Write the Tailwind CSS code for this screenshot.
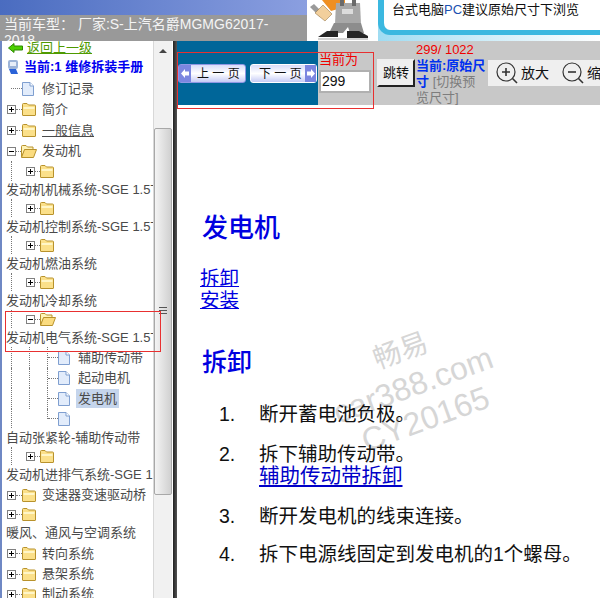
<!DOCTYPE html>
<html lang="zh">
<head>
<meta charset="utf-8">
<title>维修拆装手册</title>
<script src="https://cdn.jsdelivr.net/npm/@tailwindcss/browser@4"></script>
</head>
<body class="w-[600px] h-[598px] overflow-hidden bg-white font-['Liberation_Sans','Noto_Sans_CJK_SC',sans-serif]">

<!-- shared tree icons -->
<svg class="hidden">
  <symbol id="closed" viewBox="0 0 14 13">
    <path d="M.5 3V1.500Q.5.500 1.500.500H5L6.500 2H12.500Q13.500 2 13.500 3V12Q13.500 12.500 13 12.500H1Q.5 12.500 .5 12Z" fill="#fbe08a" stroke="#b8922c"/>
    <path d="M1.500 4H12.500V6H1.500Z" fill="#fff6c8"/>
  </symbol>
  <symbol id="open" viewBox="0 0 16 13">
    <path d="M.5 12V1.500Q.5.500 1.500.500H5L6.500 2H12V4.500H4L.5 12Z" fill="#fff3b8" stroke="#b8922c"/>
    <path d="M.5 12.500L3.500 4.500H15.500L12.500 12.500Z" fill="#fbdc80" stroke="#b8922c"/>
  </symbol>
  <symbol id="doc" viewBox="0 0 12 14">
    <path d="M.5.500H8L11.500 4V13.500H.5Z" fill="#e2ecfb" stroke="#7f9fd0"/>
    <path d="M8 .5V4H11.500" fill="#fff" stroke="#7f9fd0"/>
  </symbol>
  <symbol id="plus" viewBox="0 0 9 9">
    <rect x=".5" y=".5" width="8" height="8" fill="#fff" stroke="#808080"/>
    <path d="M2 4.500H7M4.500 2V7" stroke="#000"/>
  </symbol>
  <symbol id="minus" viewBox="0 0 9 9">
    <rect x=".5" y=".5" width="8" height="8" fill="#fff" stroke="#808080"/>
    <path d="M2 4.500H7" stroke="#000"/>
  </symbol>
</svg>

<!-- top strip -->
<div class="flex h-[41px]">
  <div class="w-[307px] flex flex-col">
    <div class="h-[15px] bg-gradient-to-r from-[#4a6cc0] to-[#8b9fe0]"></div>
    <div class="h-[26px] overflow-hidden bg-[#999999] pl-[4px] pt-[1px] text-[14px] leading-[16px] text-[#f4f4f4] whitespace-nowrap">当前车型：&nbsp;厂家:S-上汽名爵MGMG62017-<br>2018</div>
  </div>
  <svg class="w-[71px] h-[41px] bg-white" viewBox="0 0 71 41">
    <path d="M3 7L7 4L16 13L13 17Z" fill="#9a9a9a"/>
    <path d="M8 13L16 5L25 14L18 21Z" fill="#f2cf9c" stroke="#8a6a3a" stroke-width=".5"/>
    <path d="M15 0H38V7L24 11Z" fill="#ef8f22"/>
    <path d="M29 3H53L54 24H28Z" fill="#a8a8a8"/>
    <path d="M33 0H37V6H33ZM45 0H49V6H45Z" fill="#6a6a6a"/>
    <path d="M35 9H46V14H35Z" fill="#dcdcdc"/>
    <path d="M27 23H54L57 33H43L41 27L36 33H22Z" fill="#8d8d8d"/>
    <path d="M11 37L20 31H31L31 37Z" fill="#262626"/>
    <path d="M40 31H52L61 36V38H40Z" fill="#262626"/>
    <path d="M11 39H61" stroke="#c4c4c4" stroke-width="1.500"/>
  </svg>
  <div class="flex-1 bg-gradient-to-r from-[#9fdcf2] to-white">
    <div class="h-[35px] border-l-[6px] border-b-[5px] border-[#3bb8e0] rounded-bl-[12px] bg-white pl-[8px] pt-[1px] text-[13px] leading-[18px] text-[#111]">台式电脑<span class="text-[#1a50b0]">PC</span>建议原始尺寸下浏览</div>
  </div>
</div>

<div class="flex h-[557px]">
  <!-- tree panel -->
  <div class="relative w-[173px] overflow-hidden border-l-2 border-[#6f88c4] text-[13px] text-[#4a4a4a]">
    <div class="-ml-[2px] w-[153px]">
      <div class="flex items-center h-[13px] pl-[8px] gap-[4px] text-[#4f9a00] underline">
        <svg class="w-[15px] h-[10px]" viewBox="0 0 15 10"><path d="M.5 5L6 .5V3H14.500V7H6V9.500Z" fill="#4cd000" stroke="#2f8a00"/></svg>
        <span>返回上一级</span>
      </div>
      <div class="flex items-center h-[20px] mt-[3px] pl-[7px] gap-[5px] font-bold text-[#0000f0] whitespace-nowrap">
        <svg class="w-[12px] h-[16px]" viewBox="0 0 12 16"><rect x="1" y="1" width="10" height="9" rx="2" fill="#9db4d8"/><rect x="3" y="3" width="6" height="4" fill="#e8eef8"/><path d="M2 10H9L11 15H4Z" fill="#2a62d8"/></svg>
        <span>当前:1 维修拆装手册</span>
      </div>

      <div class="relative flex items-center h-[21px] mt-[1px] pl-[11px]"><span class="w-[11px] border-t border-dotted border-[#777]"></span><svg class="w-[12px] h-[14px]"><use href="#doc"/></svg><span class="ml-[8px]">修订记录</span></div>
      <div class="relative flex items-center h-[21px] pl-[7px]"><svg class="relative w-[9px] h-[9px]"><use href="#plus"/></svg><span class="w-[6px] border-t border-dotted border-[#777]"></span><svg class="w-[14px] h-[13px]"><use href="#closed"/></svg><span class="ml-[6px]">简介</span></div>
      <div class="relative flex items-center h-[21px] pl-[7px]"><svg class="relative w-[9px] h-[9px]"><use href="#plus"/></svg><span class="w-[6px] border-t border-dotted border-[#777]"></span><svg class="w-[14px] h-[13px]"><use href="#closed"/></svg><span class="ml-[6px] underline">一般信息</span></div>
      <div class="relative flex items-center h-[20px] pl-[7px]"><svg class="relative w-[9px] h-[9px]"><use href="#minus"/></svg><span class="w-[5px] border-t border-dotted border-[#777]"></span><svg class="w-[16px] h-[13px]"><use href="#open"/></svg><span class="ml-[5px]">发动机</span></div>

      <div class="flex items-center h-[20px] pl-[11px]"><span class="h-full border-l border-dotted border-[#777]"></span><svg class="ml-[14px] w-[9px] h-[9px]"><use href="#plus"/></svg><span class="w-[5px] border-t border-dotted border-[#777]"></span><svg class="w-[14px] h-[13px]"><use href="#closed"/></svg></div>
      <div class="flex items-center h-[18px] pl-[6px] whitespace-nowrap overflow-hidden">发动机机械系统-SGE 1.5T</div>
      <div class="flex items-center h-[18px] pl-[11px]"><span class="h-full border-l border-dotted border-[#777]"></span><svg class="ml-[14px] w-[9px] h-[9px]"><use href="#plus"/></svg><span class="w-[5px] border-t border-dotted border-[#777]"></span><svg class="w-[14px] h-[13px]"><use href="#closed"/></svg></div>
      <div class="flex items-center h-[19px] pl-[6px] whitespace-nowrap overflow-hidden">发动机控制系统-SGE 1.5T</div>
      <div class="flex items-center h-[18px] pl-[11px]"><span class="h-full border-l border-dotted border-[#777]"></span><svg class="ml-[14px] w-[9px] h-[9px]"><use href="#plus"/></svg><span class="w-[5px] border-t border-dotted border-[#777]"></span><svg class="w-[14px] h-[13px]"><use href="#closed"/></svg></div>
      <div class="flex items-center h-[19px] pl-[6px] whitespace-nowrap overflow-hidden">发动机燃油系统</div>
      <div class="flex items-center h-[18px] pl-[11px]"><span class="h-full border-l border-dotted border-[#777]"></span><svg class="ml-[14px] w-[9px] h-[9px]"><use href="#plus"/></svg><span class="w-[5px] border-t border-dotted border-[#777]"></span><svg class="w-[14px] h-[13px]"><use href="#closed"/></svg></div>
      <div class="flex items-center h-[19px] pl-[6px] whitespace-nowrap overflow-hidden">发动机冷却系统</div>
      <div class="flex items-center h-[18px] pl-[11px]"><span class="h-full border-l border-dotted border-[#777]"></span><svg class="ml-[14px] w-[9px] h-[9px]"><use href="#minus"/></svg><span class="w-[5px] border-t border-dotted border-[#777]"></span><svg class="w-[16px] h-[13px]"><use href="#open"/></svg></div>
      <div class="flex items-center h-[19px] pl-[6px] whitespace-nowrap overflow-hidden">发动机电气系统-SGE 1.5T</div>

      <div class="flex items-center h-[21px] pl-[11px]"><span class="h-full border-l border-dotted border-[#777]"></span><span class="ml-[17px] h-full border-l border-dotted border-[#777]"></span><span class="ml-[17px] h-full border-l border-dotted border-[#777]"></span><span class="w-[10px] border-t border-dotted border-[#777]"></span><svg class="w-[12px] h-[14px]"><use href="#doc"/></svg><span class="ml-[8px]">辅助传动带</span></div>
      <div class="flex items-center h-[20px] pl-[11px]"><span class="h-full border-l border-dotted border-[#777]"></span><span class="ml-[17px] h-full border-l border-dotted border-[#777]"></span><span class="ml-[17px] h-full border-l border-dotted border-[#777]"></span><span class="w-[10px] border-t border-dotted border-[#777]"></span><svg class="w-[12px] h-[14px]"><use href="#doc"/></svg><span class="ml-[8px]">起动电机</span></div>
      <div class="flex items-center h-[21px] pl-[11px]"><span class="h-full border-l border-dotted border-[#777]"></span><span class="ml-[17px] h-full border-l border-dotted border-[#777]"></span><span class="ml-[17px] h-full border-l border-dotted border-[#777]"></span><span class="w-[10px] border-t border-dotted border-[#777]"></span><svg class="w-[12px] h-[14px]"><use href="#doc"/></svg><span class="ml-[6px] px-[2px] bg-[#c5d5ec]">发电机</span></div>
      <div class="flex items-center h-[19px] pl-[11px]"><span class="h-full border-l border-dotted border-[#777]"></span><span class="ml-[35px] h-1/2 self-start border-l border-dotted border-[#777]"></span><span class="w-[10px] border-t border-dotted border-[#777]"></span><svg class="w-[12px] h-[14px]"><use href="#doc"/></svg></div>

      <div class="flex items-center h-[19px] pl-[6px] whitespace-nowrap overflow-hidden">自动张紧轮-辅助传动带</div>
      <div class="flex items-center h-[18px] pl-[11px]"><span class="h-full border-l border-dotted border-[#777]"></span><svg class="ml-[14px] w-[9px] h-[9px]"><use href="#plus"/></svg><span class="w-[5px] border-t border-dotted border-[#777]"></span><svg class="w-[14px] h-[13px]"><use href="#closed"/></svg></div>
      <div class="flex items-center h-[20px] pl-[6px] whitespace-nowrap overflow-hidden">发动机进排气系统-SGE 1.5T</div>

      <div class="flex items-center h-[20px] pl-[7px]"><svg class="w-[9px] h-[9px]"><use href="#plus"/></svg><span class="w-[6px] border-t border-dotted border-[#777]"></span><svg class="w-[14px] h-[13px]"><use href="#closed"/></svg><span class="ml-[6px] whitespace-nowrap">变速器变速驱动桥</span></div>
      <div class="flex items-center h-[18px] pl-[7px]"><svg class="w-[9px] h-[9px]"><use href="#plus"/></svg><span class="w-[6px] border-t border-dotted border-[#777]"></span><svg class="w-[14px] h-[13px]"><use href="#closed"/></svg></div>
      <div class="flex items-center h-[20px] pl-[6px] whitespace-nowrap overflow-hidden">暖风、通风与空调系统</div>
      <div class="flex items-center h-[21px] pl-[7px]"><svg class="w-[9px] h-[9px]"><use href="#plus"/></svg><span class="w-[6px] border-t border-dotted border-[#777]"></span><svg class="w-[14px] h-[13px]"><use href="#closed"/></svg><span class="ml-[6px]">转向系统</span></div>
      <div class="flex items-center h-[20px] pl-[7px]"><svg class="w-[9px] h-[9px]"><use href="#plus"/></svg><span class="w-[6px] border-t border-dotted border-[#777]"></span><svg class="w-[14px] h-[13px]"><use href="#closed"/></svg><span class="ml-[6px]">悬架系统</span></div>
      <div class="flex items-center h-[20px] pl-[7px]"><svg class="w-[9px] h-[9px]"><use href="#plus"/></svg><span class="w-[6px] border-t border-dotted border-[#777]"></span><svg class="w-[14px] h-[13px]"><use href="#closed"/></svg><span class="ml-[6px]">制动系统</span></div>
    </div>

    <!-- scrollbar -->
    <div class="absolute top-0 bottom-0 left-[151px] w-[19px] bg-[#f1f1f1] border-l border-[#d8d8d8]">
      <div class="mx-auto mt-[8px] w-0 h-0 border-x-[4px] border-x-transparent border-b-[4px] border-b-[#444]"></div>
      <div class="mt-[75px] h-[367px] border border-[#a8a8a8] rounded-[2px] bg-gradient-to-r from-[#f4f4f4] to-[#d0d0d0] flex flex-col items-center pt-[178px] gap-[2px]">
        <span class="w-[8px] border-t border-[#555]"></span>
        <span class="w-[8px] border-t border-[#555]"></span>
        <span class="w-[8px] border-t border-[#555]"></span>
      </div>
    </div>

    <!-- red highlight from the annotator -->
    <div class="absolute left-[3px] top-[270px] w-[156px] h-[41px] border border-[#e83030]"></div>
  </div>

  <!-- divider -->
  <div class="w-[4px] bg-gradient-to-r from-[#222] to-[#555]"></div>

  <!-- page -->
  <div class="relative flex-1 overflow-hidden">
    <!-- watermark -->
    <div class="absolute left-[136px] top-[290px] w-[200px] -rotate-[20deg] text-center text-[#d6d6d6]">
      <div class="text-[28px] leading-[36px]">畅易</div>
      <div class="text-[32px] leading-[36px] whitespace-nowrap">car388.com</div>
      <div class="text-[32px] leading-[36px]">CY20165</div>
    </div>

    <div class="relative flex h-[64px] bg-[#c8c8c8]">
      <div class="w-[141px] bg-[#006699] flex items-start gap-[4px] pt-[23px] pl-[1px]">
        <div class="relative w-[68px] h-[19px] rounded-[3px] bg-gradient-to-b from-[#d9dcf9] via-white to-[#c6cbf5] border border-[#8f97e4] flex items-center pl-[18px] text-[12px] text-[#111]">
          <span class="absolute left-0 top-0 bottom-0 w-[12px] bg-[#7b86e0] flex items-center justify-center">
            <svg class="w-[8px] h-[9px]" viewBox="0 0 8 9"><path d="M0 4.500L4 0V2.500H8V6.500H4V9Z" fill="#fff"/></svg>
          </span>
          上 一 页
        </div>
        <div class="relative w-[67px] h-[19px] rounded-[3px] bg-gradient-to-b from-[#d9dcf9] via-white to-[#c6cbf5] border border-white flex items-center pl-[8px] text-[12px] text-[#111]">
          下 一 页
          <span class="absolute right-0 top-0 bottom-0 w-[11px] bg-[#7b86e0] flex items-center justify-center">
            <svg class="w-[8px] h-[9px]" viewBox="0 0 8 9"><path d="M8 4.500L4 0V2.500H0V6.500H4V9Z" fill="#fff"/></svg>
          </span>
        </div>
      </div>
      <div class="w-[59px] pl-[1px] pt-[11px]">
        <div class="text-[13px] leading-[16px] text-[#f00000]">当前为</div>
        <div class="mt-[2px] w-[52px] h-[23px] border-2 border-[#b0b0b0] bg-white pl-[1px] text-[14px] leading-[19px] text-[#111]">299</div>
      </div>
      <button class="mt-[18px] w-[38px] h-[28px] border-2 border-t-[#eee] border-l-[#eee] border-r-[#222] border-b-[#222] bg-[#efefef] text-[13px] text-[#111]">跳转</button>
      <div class="w-[73px] pl-[1px] pt-[1px] text-[13px] leading-[16px] text-[#7d7d7d]">
        <div class="text-[#f00000]">299/ 1022</div>
        <div><span class="font-bold text-[#0030f0]">当前:原始尺寸</span>&nbsp;[切换预览尺寸]</div>
      </div>
      <div class="flex-1 mt-[19px] h-[26px] bg-[#efefef] flex items-center pl-[8px] text-[14px] text-[#111] whitespace-nowrap overflow-hidden">
        <svg class="w-[22px] h-[22px] shrink-0" viewBox="0 0 22 22" fill="none" stroke="#333"><circle cx="10" cy="10" r="9" stroke-width="1.200"/><path d="M16.500 16.500L21 21" stroke-width="1.600"/><path d="M6 10H14M10 6V14" stroke-width="1.600"/></svg>
        <span class="ml-[3px]">放大</span>
        <svg class="ml-[13px] w-[22px] h-[22px] shrink-0" viewBox="0 0 22 22" fill="none" stroke="#333"><circle cx="10" cy="10" r="9" stroke-width="1.200"/><path d="M16.500 16.500L21 21" stroke-width="1.600"/><path d="M6 10H14" stroke-width="1.600"/></svg>
        <span class="ml-[3px]">缩小</span>
      </div>
    </div>

    <div class="relative pl-[23px] pt-[107px]">
      <h1 class="pl-[2px] text-[26px] leading-[32px] font-medium text-[#0000e0]">发电机</h1>
      <div class="mt-[23px] flex flex-col items-start text-[19.5px] leading-[22px] text-[#0000e0] underline">
        <a href="#">拆卸</a>
        <a href="#">安装</a>
      </div>
      <h2 class="mt-[35px] pl-[2px] text-[25px] leading-[32px] font-medium text-[#0000e0]">拆卸</h2>
      <ol class="mt-[25px] pl-[19px] text-[19.5px] leading-[22px] text-[#111]">
        <li class="flex"><span class="w-[40px] shrink-0">1.</span><span>断开蓄电池负极。</span></li>
        <li class="flex mt-[18px]"><span class="w-[40px] shrink-0">2.</span><span>拆下辅助传动带。<br><a href="#" class="text-[20.5px] text-[#0000c8] underline">辅助传动带拆卸</a></span></li>
        <li class="flex mt-[18px]"><span class="w-[40px] shrink-0">3.</span><span>断开发电机的线束连接。</span></li>
        <li class="flex mt-[16px]"><span class="w-[40px] shrink-0">4.</span><span class="whitespace-nowrap">拆下电源线固定到发电机的1个螺母。</span></li>
      </ol>
    </div>

    <!-- red highlight from the annotator -->
    <div class="absolute left-0 top-[11px] w-[197px] h-[57px] border border-[#e83030]"></div>
  </div>
</div>
</body>
</html>
